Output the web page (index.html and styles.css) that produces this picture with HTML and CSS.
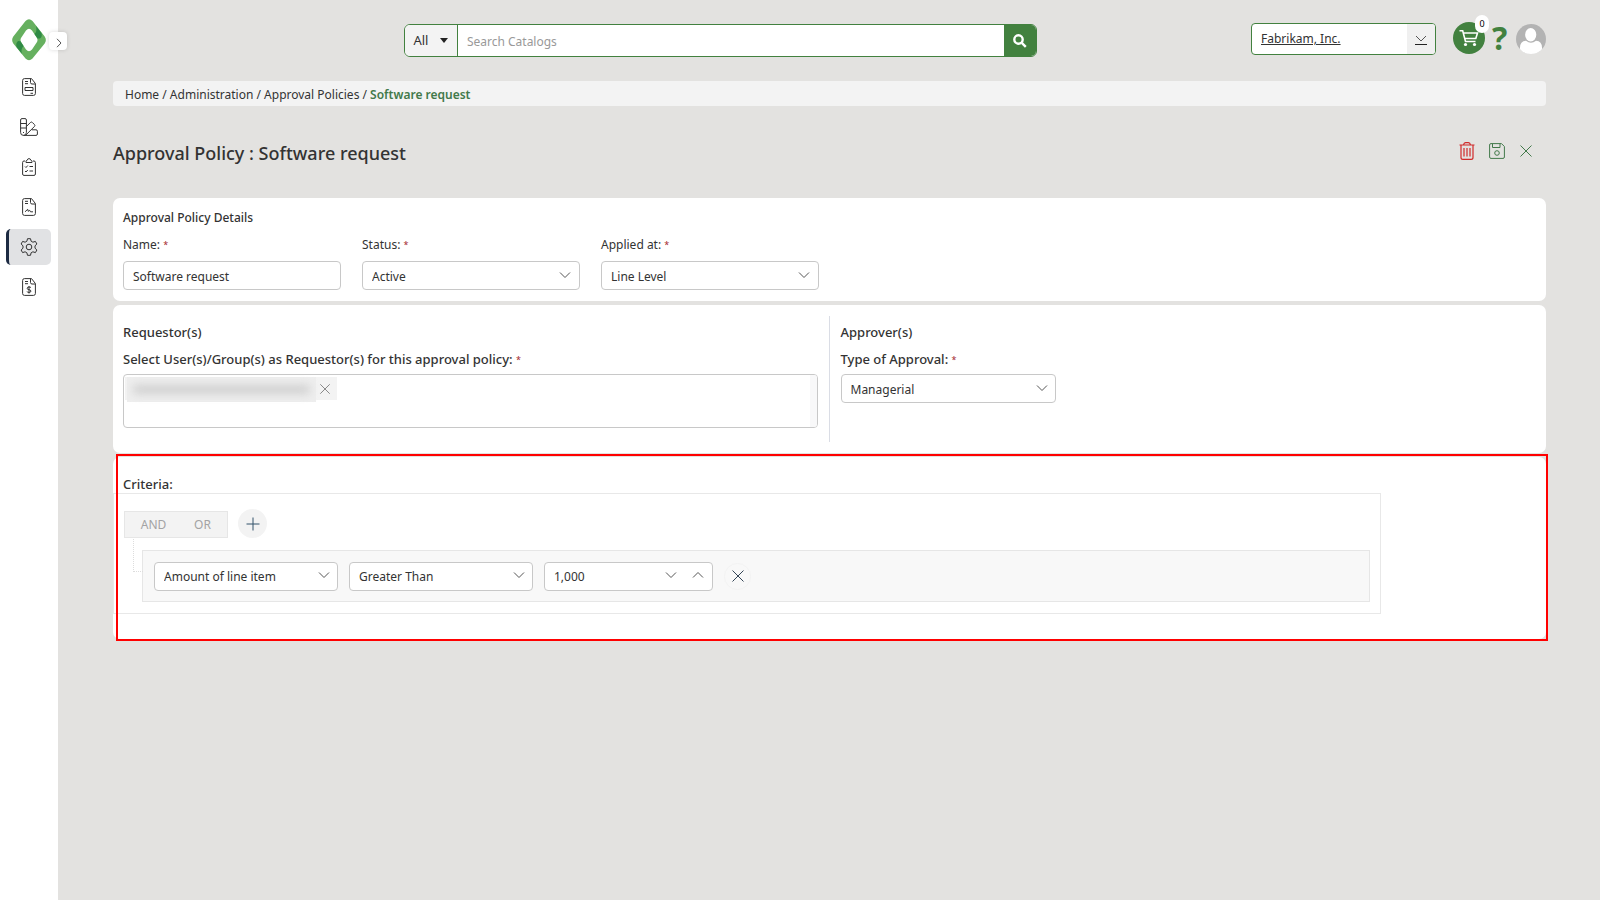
FILE: index.html
```html
<!DOCTYPE html>
<html lang="en">
<head>
<meta charset="utf-8">
<meta name="viewport" content="width=device-width, initial-scale=1">
<title>Approval Policy</title>
<link rel="stylesheet" href="styles.css">
</head>
<body>
<svg class="defs" aria-hidden="true">
  <symbol id="chev" viewBox="0 0 12 8"><path d="M1 1.500l5 5 5-5"/></symbol>
  <symbol id="cross" viewBox="0 0 14 14"><path d="M1.500 1.500l11 11M12.500 1.500l-11 11"/></symbol>
</svg>
<div class="app">
  <aside class="sidebar">
    <a class="logo" href="#" aria-label="Home page">
      <svg width="34" height="42" viewBox="0 0 34 42">
        <path fill="#66b05f" fill-rule="evenodd" d="M13.500 2Q17-1.300 20.500 2L32.700 17.500Q35 21 32.700 24.500L20.500 39.500Q17 42.800 13.500 39.500L1.300 24.500Q-1 21 1.300 17.500ZM14 11.500L9 19Q8 21 9 23L14 30.500Q17 34 20 30.500L25 23Q26 21 25 19L20 11.500Q17 8 14 11.500Z"/>
        <path fill="#2f8a45" d="M24 7L29.500 14Q30.500 18 28 19.500L25.500 19.500 22.500 15Q25.500 12 24 7ZM10 35L4.500 28Q3.500 24 6 22L8.500 22.300 11.500 27Q8.500 30 10 35Z"/>
      </svg>
    </a>
    <button class="toggle" aria-label="Expand menu"><svg width="6" height="10" viewBox="0 0 6 10"><path d="M1 .8l4 4.200-4 4.200"/></svg></button>
    <nav class="nav">
      <a href="#" aria-label="Requests"><svg width="14" height="18" viewBox="0 0 14 18"><path d="M9.500.6H2.500Q.6.600.6 2.500v13q0 1.900 1.900 1.900h9q1.900 0 1.900-1.900V5.500zM8.500.8V4.500q0 1.500 1.500 1.500h3.200M3 3.500h3M3 5.700h3M3 9.500h8v3H3zM8.500 15.300h2.500"/></svg></a>
      <a href="#" aria-label="Catalogs"><svg width="18" height="18" viewBox="0 0 18 18"><path d="M.6 2q0-1.400 1.400-1.400h3q1.400 0 1.400 1.400v12.500q0 2.900-2.900 2.900T.6 14.500zM.6 5.500h5.800M.6 10h5.800M3.500 14v1M6.400 8.500l4-4q1-1 2 0l2 2q1 1 0 2l-8.500 8.500M11.800 11.800H16q1.400 0 1.400 1.400V16q0 1.400-1.400 1.400H3.500"/></svg></a>
      <a href="#" aria-label="Approvals"><svg width="14" height="18" viewBox="0 0 14 18"><path d="M3 3H2Q.6 3 .6 4.400V16q0 1.400 1.400 1.400h10q1.400 0 1.400-1.400V4.400Q13.400 3 12 3h-1M4 4.500V3.200Q4 2.500 5 2.500 5.500.6 7 .6T9 2.500q1 0 1 .7v1.300zM3 8.500l1 1 1.800-2M7.500 8.500h3.500M3 13l1 1 1.800-2M7.500 13h3.500"/></svg></a>
      <a href="#" aria-label="Contracts"><svg width="14" height="18" viewBox="0 0 14 18"><path d="M9.500.6H2.500Q.6.600.6 2.500v13q0 1.900 1.900 1.900h9q1.900 0 1.900-1.900V5.500zM8.500.8V4.500q0 1.500 1.500 1.500h3.200M3 3.300h3M3 5.500h3M3 13.800l2.700-2.500.5 2 1.500-1 .8 1.500h2.500"/></svg></a>
      <a class="active" href="#" aria-current="page" aria-label="Administration"><svg width="18" height="18" viewBox="0 0 18 18"><circle cx="9" cy="9" r="2.800"/><path d="M7.500.7h3l.6 2.500 1.800 1 2.500-.8 1.500 2.600-1.900 1.800v2.400l1.900 1.800-1.500 2.600-2.500-.8-1.800 1-.6 2.500h-3l-.6-2.500-1.800-1-2.500.8L1.100 12 3 10.200V7.800L1.100 6l1.500-2.600 2.500.8 1.800-1z"/></svg></a>
      <a href="#" aria-label="Invoices"><svg width="14" height="18" viewBox="0 0 14 18"><path d="M9.500.6H2.500Q.6.600.6 2.500v13q0 1.900 1.900 1.900h9q1.900 0 1.900-1.900V5.500zM8.500.8V4.500q0 1.500 1.500 1.500h3.200M3 3.500h3M3 5.700h3M9 9.700Q8.500 9 7 9 5.200 9 5.200 10.300T7 11.700t1.900 1.400T7 14.400t-1.900-.9M7 8v7.500"/></svg></a>
    </nav>
  </aside>
  <main class="main">
    <header class="header">
      <form class="search" role="search">
        <button class="scope" type="button">All <span class="caret"></span></button>
        <input class="search-input" type="text" placeholder="Search Catalogs" aria-label="Search Catalogs">
        <button class="search-btn" type="button" aria-label="Search"><svg width="14" height="14" viewBox="0 0 14 14"><circle cx="5.500" cy="5.500" r="4.200"/><path d="M8.800 8.800l4 4"/></svg></button>
      </form>
      <div class="tools">
        <div class="company"><a href="#">Fabrikam, Inc.</a><button type="button" aria-label="Choose company"><svg width="12" height="8"><use href="#chev"/></svg></button></div>
        <button class="cart" aria-label="Cart"><svg width="20" height="18" viewBox="0 0 20 18"><path fill="none" stroke="#fff" stroke-width="1.600" d="M.5 1.800h3.200L6.500 12.500H16.500M4.500 4h14L16.800 9.500H6"/><circle cx="6.500" cy="15.500" r="1.600" fill="#fff"/><circle cx="15.500" cy="15.500" r="1.600" fill="#fff"/></svg><span class="badge">0</span></button>
        <button class="help" aria-label="Help">?</button>
        <button class="avatar" aria-label="Account"><svg width="30" height="30" viewBox="0 0 30 30"><circle cx="15" cy="15" r="15" fill="#b3b3b3"/><path fill="#fff" d="M4 25.200Q3.500 17 10 16.800q5 3.800 10 0 6.500.2 6 8.400Q22 30 15 30T4 25.200Z"/><ellipse cx="14.700" cy="10.700" rx="5.600" ry="6.700" fill="#fff"/></svg></button>
      </div>
    </header>
    <nav class="crumbs" aria-label="Breadcrumb"><a href="#">Home</a> / <a href="#">Administration</a> / <a href="#">Approval Policies</a> / <strong>Software request</strong></nav>
    <div class="title-row">
      <h1>Approval Policy : Software request</h1>
      <div class="actions">
        <button class="danger" aria-label="Delete"><svg width="16" height="18" viewBox="0 0 16 18"><path d="M.5 3h15M4.500 2.800Q5 .7 6.500.7h3q1.500 0 2 2.100M2 3v12.500q0 1.900 1.900 1.900h8.200q1.900 0 1.900-1.900V3M5 6v8.500M8 6v8.500M11 6v8.500"/></svg></button>
        <button aria-label="Save"><svg width="16" height="16" viewBox="0 0 16 16"><path d="M.6 2Q.6.600 2 .6h10.500l2.900 2.900V14q0 1.400-1.400 1.400H2Q.6 15.400.6 14zM3.500.8v3.700h7.500V.8"/><circle cx="8" cy="10" r="2.300"/></svg></button>
        <button aria-label="Close"><svg width="14" height="14"><use href="#cross"/></svg></button>
      </div>
    </div>

    <section class="card details">
      <h2>Approval Policy Details</h2>
      <div class="fields">
        <div class="field"><label for="name">Name: <span class="req">*</span></label><input id="name" class="control" type="text" value="Software request"></div>
        <div class="field"><label for="status">Status: <span class="req">*</span></label><div class="select"><select id="status" class="control"><option>Active</option></select><svg width="12" height="8"><use href="#chev"/></svg></div></div>
        <div class="field"><label for="applied">Applied at: <span class="req">*</span></label><div class="select"><select id="applied" class="control"><option>Line Level</option></select><svg width="12" height="8"><use href="#chev"/></svg></div></div>
      </div>
    </section>

    <section class="card people">
      <div class="requestors">
        <h2>Requestor(s)</h2>
        <label class="strong" for="req">Select User(s)/Group(s) as Requestor(s) for this approval policy: <span class="req">*</span></label>
        <div class="tags">
          <div class="tag"><span class="masked"><span class="smear"></span></span><button type="button" aria-label="Remove"><svg width="12" height="12"><use href="#cross"/></svg></button></div>
          <input id="req" type="text">
          <span class="track"></span>
        </div>
      </div>
      <div class="approvers">
        <h2>Approver(s)</h2>
        <label class="strong" for="type">Type of Approval: <span class="req">*</span></label>
        <div class="select narrow"><select id="type" class="control"><option>Managerial</option></select><svg width="12" height="8"><use href="#chev"/></svg></div>
      </div>
    </section>

    <section class="card criteria">
      <h2>Criteria:</h2>
      <div class="query">
        <div class="group-bar">
          <div class="andor"><button type="button">AND</button><button type="button">OR</button></div>
          <button class="add" type="button" aria-label="Add rule"><svg width="14" height="14" viewBox="0 0 14 14"><path d="M7 .5v13M.5 7h13"/></svg></button>
        </div>
        <div class="rule">
          <div class="select"><select class="control" aria-label="Field"><option>Amount of line item</option></select><svg width="12" height="8"><use href="#chev"/></svg></div>
          <div class="select"><select class="control" aria-label="Operator"><option>Greater Than</option></select><svg width="12" height="8"><use href="#chev"/></svg></div>
          <div class="number control"><input type="text" value="1,000" aria-label="Amount"><button type="button" aria-label="Decrease"><svg width="12" height="8"><use href="#chev"/></svg></button><button class="up" type="button" aria-label="Increase"><svg width="12" height="8"><use href="#chev"/></svg></button></div>
          <button class="remove" type="button" aria-label="Remove rule"><svg width="14" height="14"><use href="#cross"/></svg></button>
        </div>
      </div>
      <div class="highlight"></div>
    </section>
  </main>
</div>
</body>
</html>
```
FILE: styles.css
```css
* { box-sizing: border-box; }
body { margin: 0; background: #e3e2e0; color: #333; font: 12px/18px "Segoe UI", "Noto Sans", "Open Sans", sans-serif; }
button, input, select { font: inherit; color: inherit; margin: 0; }
button { border: 0; background: none; padding: 0; display: flex; align-items: center; justify-content: center; }
a { color: inherit; text-decoration: none; }
h1, h2 { margin: 0; font-weight: 500; }
svg { display: block; flex: none; fill: none; stroke: #555; stroke-width: 1; }
.defs { position: absolute; width: 0; height: 0; }

.app { display: flex; min-height: 100vh; }
.sidebar { position: relative; flex: none; width: 58px; background: #fff; padding: 19px 7px 0 6px; }
.logo { display: block; margin-left: 6px; }
.logo svg { stroke: none; }
.toggle { position: absolute; left: 49px; top: 32px; width: 18px; height: 18px; padding-left: 2px; padding-top: 4px; border-radius: 4px; background: #fff; box-shadow: 0 0 4px rgba(0, 0, 0, .15); }
.nav { display: grid; gap: 4px; margin-top: 8px; }
.nav a { display: flex; align-items: center; justify-content: center; height: 36px; border-left: 3px solid transparent; border-radius: 5px; padding-right: 3px; }
.nav a svg { stroke: #333; stroke-width: 1; }
.nav a.active { background: #e1e2e4; border-left-color: #1c2a42; }

.main { flex: 1; min-width: 0; padding: 23px 54px 40px 55px; }
.header { display: flex; align-items: flex-start; height: 34px; }
.search { display: flex; width: 44.2%; height: 33px; margin: 1px 0 0 20.3%; border: 1px solid #42813f; border-radius: 6px; background: #fff; overflow: hidden; }
.scope { width: 53px; gap: 12px; background: #f3f3f3; border-right: 1px solid #42813f; padding-bottom: 1px; font-size: 13px; }
.caret { border: 4px solid transparent; border-top: 5px solid #222; border-bottom: 0; }
.search-input { flex: 1; min-width: 0; border: 0; outline: 0; background: none; padding: 2px 9px 0; font-size: 12px; }
.search-input::placeholder { color: #999; opacity: 1; }
.search-btn { width: 32px; background: #42813f; }
.search-btn svg { stroke: #fff; stroke-width: 2.400; }
.tools { display: flex; margin-left: auto; }
.company { display: flex; width: 185px; height: 32px; border: 1px solid #42813f; border-radius: 4px; background: #fff; overflow: hidden; }
.company a { flex: 1; padding: 6px 9px; text-decoration: underline; }
.company button { width: 28px; background: #f0f0f0; }
.company svg { height: 12px; border-bottom: 1px solid #222; }
.cart { position: relative; width: 32px; height: 32px; margin: -1px 0 0 17px; border-radius: 50%; background: #42813f; }
.cart svg { stroke: none; }
.badge { position: absolute; right: -4px; top: -7px; width: 14px; height: 18px; border-radius: 7px; background: #fff; color: #000; font-size: 9px; line-height: 18px; }
.help { width: 15px; height: 30px; margin-left: 7px; color: #42813f; font: bold 32px/30px "Noto Sans", sans-serif; }
.avatar { margin-left: 9px; }
.avatar svg { stroke: none; }

.crumbs { margin-top: 24px; height: 25px; padding: 5px 12px; border-radius: 4px; background: #f3f3f3; line-height: 18px; }
.crumbs strong { color: #42794a; font-weight: 600; }
.title-row { display: flex; justify-content: space-between; align-items: center; height: 92px; padding-right: 13px; }
h1 { font-size: 18px; line-height: 26px; padding-top: 2px; }
.actions { display: flex; align-items: center; gap: 14px; margin-top: -2px; }
.actions svg { stroke: #42794a; }
.actions .danger svg { stroke: #d02a2a; stroke-width: 1.200; }

.card { background: #fff; border-radius: 7px; margin-bottom: 4px; }
h2 { font-size: 13px; line-height: 18px; }
label { display: block; line-height: 18px; }
label.strong { font-size: 13px; font-weight: 500; }
.req { color: #a4262c; font-size: 9px; font-weight: 400; line-height: 1; vertical-align: 1px; }
.details { padding: 11px 10px; }
.details h2 { font-size: 12px; }
.fields { display: grid; grid-template-columns: repeat(6, 1fr); gap: 21px; margin-top: 9px; }
.control { display: block; width: 100%; height: 29px; border: 1px solid #c8c8c8; border-radius: 4px; background: #fff; padding: 2px 9px 0; outline: 0; appearance: none; font-size: 12px; }
.field label { margin-bottom: 7px; }
.select { display: grid; align-items: center; }
.select > * { grid-area: 1 / 1; }
.select svg { justify-self: end; margin: 0 8px 2px 0; pointer-events: none; }
.field .select svg { margin-right: 9px; }

.people { display: grid; grid-template-columns: 1fr 1fr; padding: 11px 0; }
.requestors { padding: 7px 11px 14px 10px; border-right: 1px solid #dadde5; }
.approvers { padding: 7px 10px 14px 11px; }
.people label { margin: 9px 0 6px; }
.narrow { width: 31%; }
.tags { position: relative; height: 54px; border: 1px solid #c8c8c8; border-radius: 4px; padding: 2px 0 0 1px; overflow: hidden; }
.tag { display: flex; width: 212px; height: 23px; background: #f3f3f3; }
.masked { width: 189px; height: 25px; margin-left: 2px; padding: 8px 6px; background: #eee; }
.smear { display: block; height: 9px; border-radius: 4px; background: #d0d0d0; filter: blur(4px); }
.tag button { flex: 1; padding-right: 3px; }
.tag svg { stroke: #777; }
.tags input { display: block; width: 95%; height: 24px; border: 0; outline: 0; background: none; }
.track { position: absolute; right: 0; top: 0; bottom: 0; width: 7px; background: #f8f8f9; }

.criteria { position: relative; padding: 18px 0 25px; }
.criteria h2 { padding-left: 10px; }
.query { width: 88.500%; border: 1px solid #e8e8e8; padding: 15px 10px 11px; }
.group-bar { display: flex; align-items: center; gap: 10px; height: 29px; }
.andor { display: flex; width: 104px; height: 27px; margin-top: 2px; border: 1px solid #e6e6e6; background: #f3f3f3; color: #a3a3a3; }
.andor button { flex: 1; }
.andor button:first-child { padding-left: 4px; }
.add { width: 29px; height: 29px; border-radius: 50%; background: #f3f3f3; }
.add svg { stroke: #33526b; }
.rule { position: relative; display: flex; align-items: center; gap: 11px; height: 52px; margin: 12px 0 0 18px; padding: 0 11px; border: 1px solid #e6e6e6; background: #f8f8f8; }
.rule::before { content: ""; position: absolute; left: -10px; top: -12px; width: 9px; height: 32px; border: 1px dotted #ddd; border-width: 0 0 1px 1px; }
.rule .select { width: 184px; }
.number { display: flex; align-items: center; width: 169px; padding: 0 8px 0 9px; }
.number input { flex: 1; min-width: 0; border: 0; padding: 2px 0 0; outline: 0; background: none; }
.number button { height: 27px; padding-bottom: 2px; }
.number .up { margin-left: 15px; }
.up svg { transform: rotate(180deg); }
.remove { width: 27px; height: 27px; border: 1px solid #f3f3f3; border-radius: 50%; }
.remove svg { stroke: #345; }
.highlight { position: absolute; top: -3px; right: -2px; bottom: -2px; left: 3px; border: 2px solid #f00; pointer-events: none; }
```
